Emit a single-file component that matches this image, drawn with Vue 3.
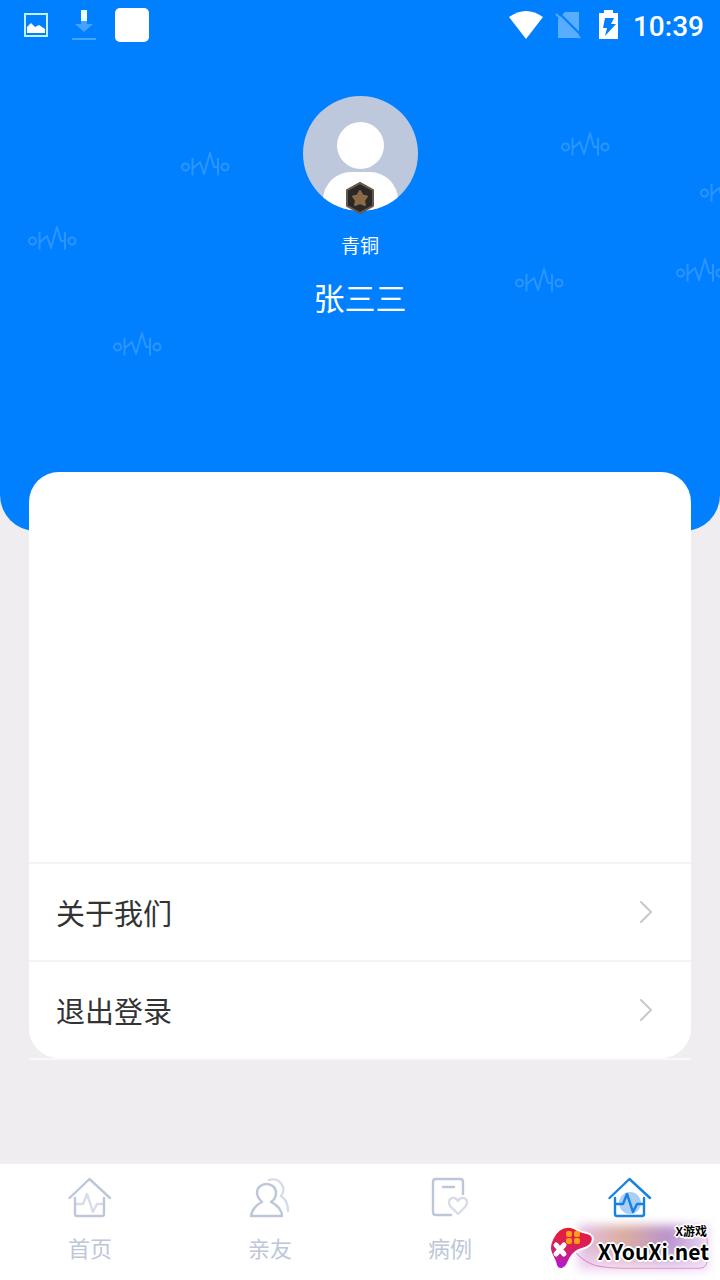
<script setup>
const pulses = [
  [181, 165], [28, 239], [113, 345], [561, 145], [700, 191], [515, 281], [676, 271]
]
const rows = ['关于我们', '退出登录']
const tabs = [
  { id: 'home', label: '首页' },
  { id: 'friends', label: '亲友' },
  { id: 'cases', label: '病例' },
  { id: 'mine', label: '', active: true }
]
</script>

<template>
  <div class="page">
    <header class="hero">
      <svg class="pattern" viewBox="0 0 720 531" preserveAspectRatio="xMidYMin slice" aria-hidden="true">
        <g v-for="([x, y], i) in pulses" :key="i" :transform="`translate(${x} ${y})`" fill="none" stroke="#2b95ff" stroke-width="2" stroke-linejoin="round">
          <circle cx="4.500" cy="2" r="3.500" />
          <circle cx="44" cy="2" r="3.500" />
          <path d="M11.500-7V10.500M12 3L19-3L23 9L29-12L33 2H37M37-7V10.500" />
        </g>
      </svg>

      <div class="status">
        <div class="status-side">
          <svg width="24" height="26" viewBox="0 0 24 26" fill="none">
            <rect x="1" y="2" width="22" height="22" stroke="#c2f0ff" stroke-width="2" />
            <path d="M3 21V15L7 11L11 15L15 13L21 17V21Z" fill="#fff" />
          </svg>
          <svg class="download" width="24" height="32" viewBox="0 0 24 32">
            <path d="M9 1H15V12H9Z" fill="#eaffff" />
            <path d="M9 12H15V15H21L12 23L3 15H9Z" fill="#44a3ff" />
            <path d="M0 29H24V31H0Z" fill="#44a3ff" />
          </svg>
          <span class="blank-app"></span>
        </div>
        <div class="status-side right">
          <svg width="36" height="30" viewBox="0 0 36 30"><path d="M1 7Q18-5 35 7L18 29Z" fill="#fff" /></svg>
          <svg class="sim" width="26" height="30" viewBox="0 0 26 30">
            <path d="M10 2H24V28H3V9Z" fill="#59adff" />
            <path d="M2 1L27 26" stroke="#007fff" stroke-width="2" />
            <path d="M1 4L25 28" stroke="#59adff" stroke-width="2" />
          </svg>
          <svg class="battery" width="20" height="30" viewBox="0 0 20 30">
            <path d="M5 0H14V3H19V29H0V3H5Z" fill="#fff" />
            <path d="M6 8H15L12 14H17L6 26L8 18H4Z" fill="#007fff" />
          </svg>
          <time class="clock">10:39</time>
        </div>
      </div>

      <div class="profile">
        <div class="avatar">
          <svg width="115" height="115" viewBox="0 0 115 115" role="img" aria-label="头像">
            <defs><clipPath id="face"><circle cx="57.500" cy="57.500" r="57.500" /></clipPath></defs>
            <g clip-path="url(#face)">
              <rect width="115" height="115" fill="#bec8dc" />
              <circle cx="57.500" cy="49.500" r="23.500" fill="#fff" />
              <rect x="20" y="76" width="75" height="60" rx="28" fill="#fff" />
            </g>
          </svg>
          <svg class="badge" width="30" height="34" viewBox="0 0 30 34" aria-hidden="true">
            <path d="M15 2L28 9V25L15 32L2 25V9Z" fill="#2a2828" stroke="#66584a" stroke-width="2" />
            <path d="M15 10L17.500 14.500L22 15.500L19 19.500L20 24L15 22L10 24L11 19.500L8 15.500L12.500 14.500Z" fill="#8b6b45" stroke="#8b6b45" stroke-width="2" stroke-linejoin="round" />
          </svg>
        </div>
        <p class="level">青铜</p>
        <h1 class="name">张三三</h1>
      </div>
    </header>

    <main class="content">
      <section class="card">
        <div class="blank"></div>
        <button v-for="r in rows" :key="r" type="button" class="row">
          <span>{{ r }}</span>
          <svg width="14" height="24" viewBox="0 0 14 24" fill="none" aria-hidden="true"><path d="M2 2L12 12L2 22" stroke="#c7c7cc" stroke-width="2" stroke-linecap="round" /></svg>
        </button>
      </section>
      <div class="edge"></div>
    </main>

    <nav class="tabs">
      <a v-for="t in tabs" :key="t.id" href="#" class="tab" :class="{ active: t.active }" :aria-label="t.label || '我的'">
        <svg width="44" height="42" viewBox="0 0 44 42" fill="none" stroke="currentColor" stroke-width="2.400" stroke-linecap="round" stroke-linejoin="round" aria-hidden="true">
          <template v-if="t.id === 'home' || t.id === 'mine'">
            <circle v-if="t.active" cx="22" cy="27" r="11" fill="#a9cff7" stroke="none" />
            <path d="M1.500 22L21.500 3L42 22M7 22V38Q7 40 9 40H34Q36 40 36 38V22" />
            <path :class="{ faint: !t.active }" d="M8 28H15L19 18L25 36L29 28H35" />
          </template>
          <template v-else-if="t.id === 'friends'">
            <path d="M14 26C12 24 9 21 9 17C9 5 28 5 28 17C28 21 26 24 23 26C30 29 34 35 34 40H3C4 34 8 29 14 26Z" />
            <path class="faint" d="M21 4C32 1 39 12 33 20C38 23 40 28 40 35" />
          </template>
          <template v-else>
            <path d="M23 39H8Q5 39 5 36V6Q5 3 8 3H32Q35 3 35 6V18M15 11H26" />
            <path class="faint" d="M30 38L23 31C17 24 26 18 30 25C34 18 43 24 37 31Z" />
          </template>
        </svg>
        <span v-if="t.label">{{ t.label }}</span>
      </a>
    </nav>

    <div class="mark">
      <div class="glow"></div>
      <svg class="swoosh" viewBox="0 0 160 48" aria-hidden="true">
        <path d="M28 28C42 43 55 42 75 43H150Q158 43 158 34V16Q158 6 149 5" fill="none" stroke="#d25da8" stroke-width="1" opacity=".6" />
      </svg>
      <svg class="pad" width="48" height="48" viewBox="0 0 48 48" aria-hidden="true">
        <defs><linearGradient id="padFill" x1="0" y1="0" x2="0" y2="1"><stop offset="0" stop-color="#e71c35" /><stop offset=".5" stop-color="#d7205d" /><stop offset="1" stop-color="#a91be0" /></linearGradient></defs>
        <path d="M11 5C15 2 21 1 26 3C30 6 34 7 39 8C44 9 46 13 44 17C42 22 37 23 31 25C26 27 23 31 20 38C17 45 10 46 8 40C7 34 2 29 2 23C2 17 6 9 11 5Z" fill="url(#padFill)" stroke="#fff" stroke-width="2" />
        <path d="M8 20L16 29M16 20L8 29" stroke="#fff" stroke-width="5" stroke-linecap="round" />
        <g fill="#ff9c19"><rect x="18" y="6" width="6" height="6" rx="2" /><rect x="26" y="6" width="6" height="6" rx="2" /><rect x="18" y="13" width="6" height="6" rx="2" /><rect x="26" y="13" width="6" height="6" rx="2" /></g>
      </svg>
      <div class="mark-text">
        <span class="mark-small">X游戏</span>
        <span class="mark-large">XYouXi.net</span>
      </div>
    </div>
  </div>
</template>

<style>
body { background: #efedf0; }
</style>

<style scoped>
.page {
  position: relative;
  display: flex;
  flex-direction: column;
  min-height: 100vh;
  overflow: hidden;
  background: #efedf0;
  font-family: "Noto Sans CJK SC", sans-serif;
}
.hero {
  position: relative;
  overflow: hidden;
  padding-bottom: 212px;
  border-radius: 0 0 36px 36px;
  background: #007fff;
  color: #fff;
}
.pattern { position: absolute; inset: 0; width: 100%; height: 100%; }
.status {
  position: relative;
  display: flex;
  justify-content: space-between;
  align-items: center;
  height: 50px;
  padding: 0 16px 0 24px;
}
.status-side { display: flex; align-items: center; }
.download { margin: 0 19px 0 24px; }
.blank-app { width: 34px; height: 34px; border-radius: 5px; background: #fff; }
.sim { margin: 0 18px 0 11px; }
.battery { margin-right: 14px; }
.clock { padding-top: 3px; font: 500 28px/32px Roboto, sans-serif; }
.profile {
  position: relative;
  display: flex;
  flex-direction: column;
  align-items: center;
  padding-top: 46px;
}
.avatar { position: relative; height: 115px; }
.avatar svg { display: block; }
.avatar .badge { position: absolute; left: 50%; bottom: -4px; margin-left: -15px; }
.level { margin: 20px 0 0; font-size: 19px; line-height: 28px; }
.name { margin: 16px 0 0; font-size: 31px; line-height: 44px; font-weight: 400; }
.content { position: relative; margin: -59px 29px 0; }
.card { overflow: hidden; border-radius: 30px; background: #fff; }
.blank { height: 390px; }
.row {
  display: flex;
  justify-content: space-between;
  align-items: center;
  width: 100%;
  height: 98px;
  padding: 0 38px 0 27px;
  border: 0;
  border-top: 2px solid #f4f4f5;
  background: #fff;
  color: #333;
  font: 400 29px/42px "Noto Sans CJK SC", sans-serif;
}
.edge { height: 2px; background: #f8f8f9; }
.tabs { display: flex; height: 116px; margin-top: auto; background: #fff; }
.tab {
  flex: 1;
  display: flex;
  flex-direction: column;
  align-items: center;
  padding-top: 12px;
  color: #bdc7d9;
  font-size: 22px;
  line-height: 32px;
  text-decoration: none;
}
.tab span { margin-top: 13px; }
.tab.active { color: #1681e4; }
.faint { opacity: .6; }
.mark {
  position: absolute;
  right: 11px;
  bottom: 7px;
  display: flex;
  align-items: flex-start;
  gap: 2px;
}
.glow {
  position: absolute;
  inset: 0 0 2px 30px;
  background:
    linear-gradient(180deg, transparent 50%, #f3dcf8),
    linear-gradient(90deg, #e2c0e8, #dcae9f 35%, #b893cf 70%, #f0dcf2);
  filter: blur(5px);
}
.swoosh { position: absolute; inset: 0; width: 100%; }
.pad { position: relative; }
.mark-text {
  position: relative;
  display: flex;
  flex-direction: column;
  color: #000;
  font-weight: 700;
  text-shadow: 2px 0 #fff, -2px 0 #fff, 0 2px #fff, 0 -2px #fff, 1px 1px #fff, -1px -1px #fff, 1px -1px #fff, -1px 1px #fff;
}
.mark-small { align-self: flex-end; margin-right: 2px; font-size: 12px; line-height: 12px; }
.mark-large { font-size: 21px; line-height: 28px; }
</style>
